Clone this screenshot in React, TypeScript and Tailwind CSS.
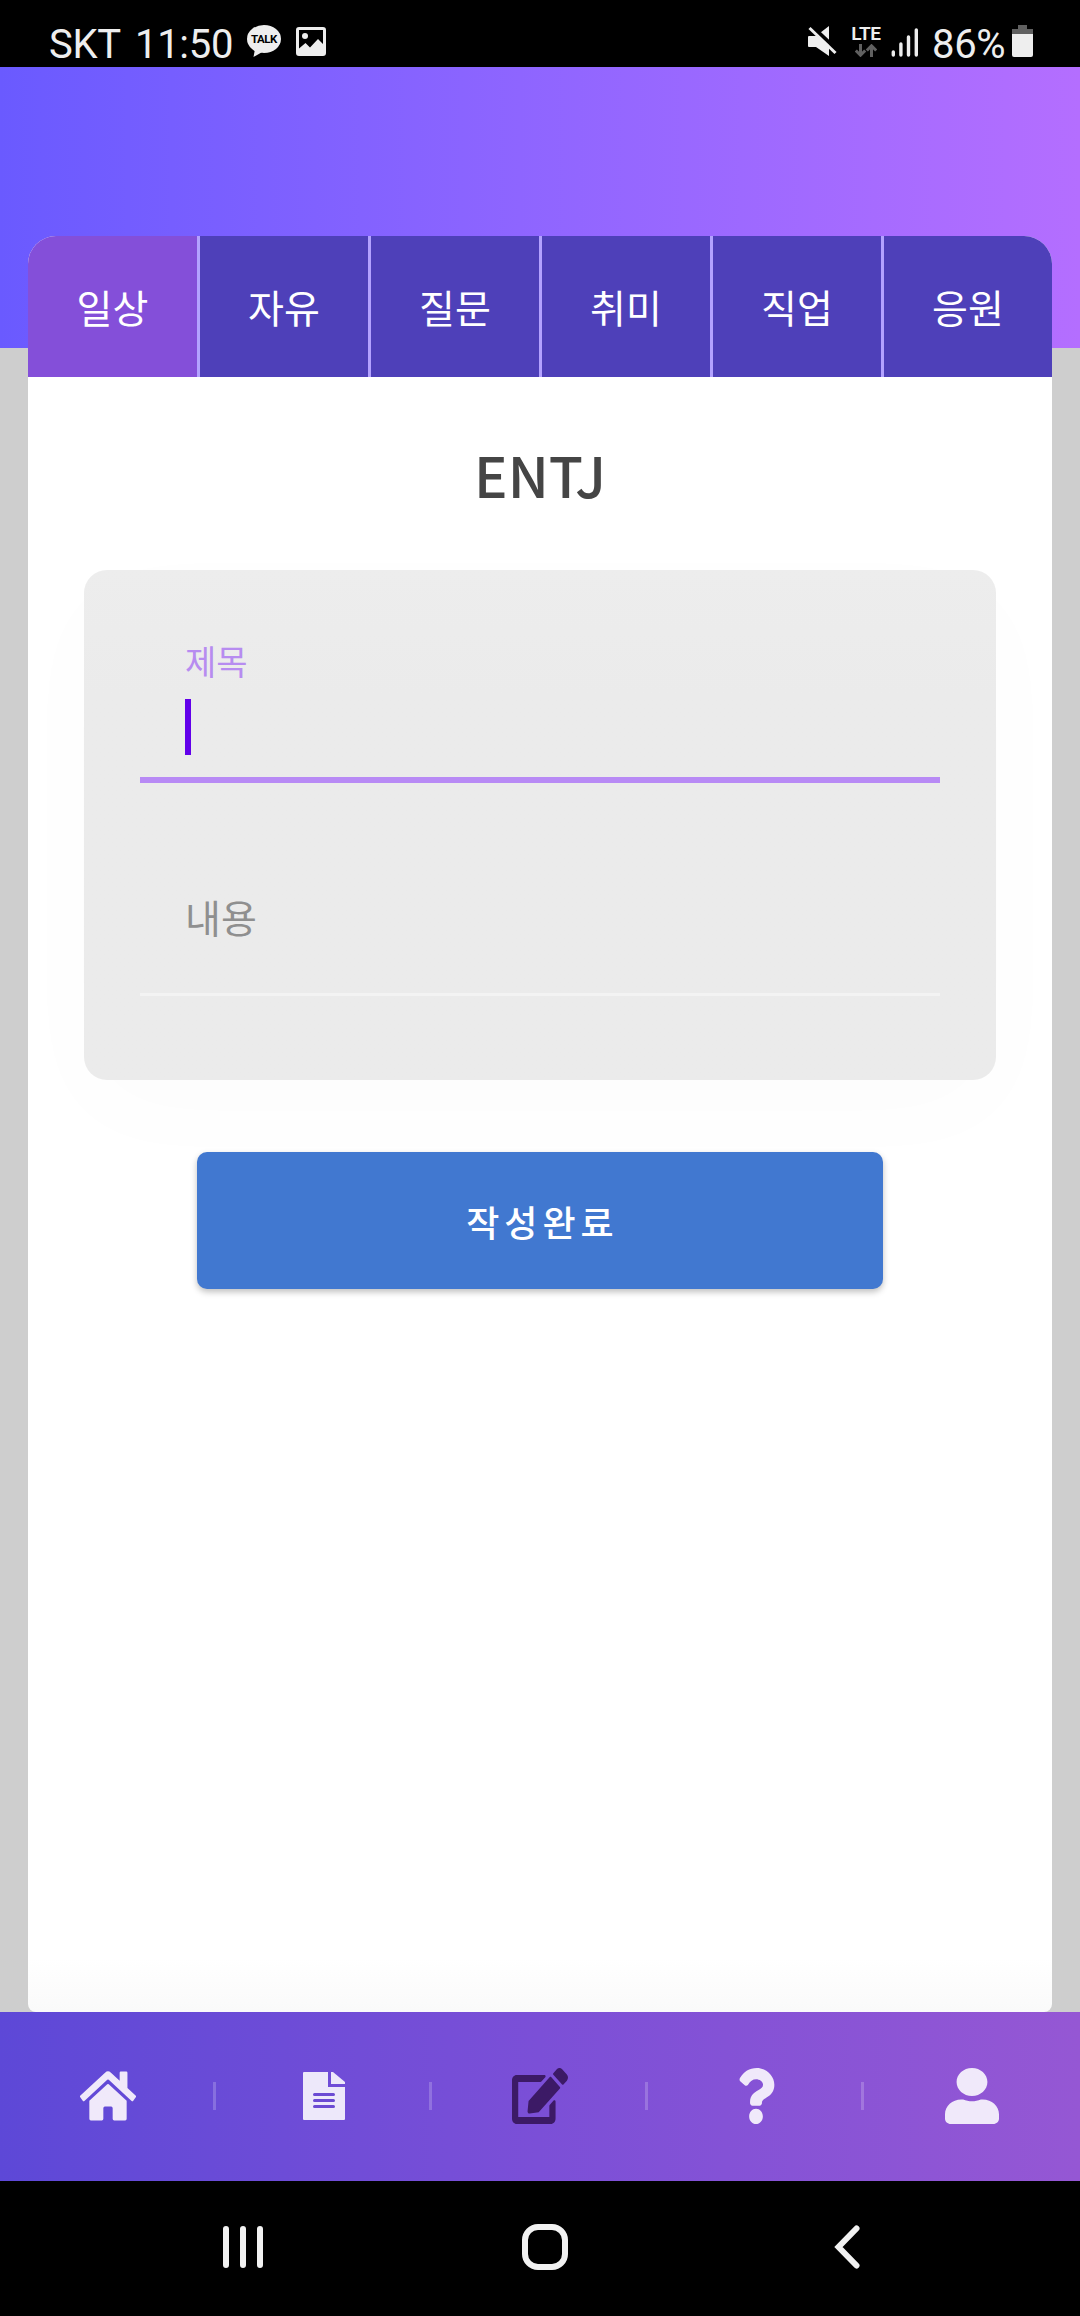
import { useState } from "react";
import { FaEdit, FaHome, FaQuestion, FaUser } from "react-icons/fa";

const TABS = ["일상", "자유", "질문", "취미", "직업", "응원"];

function TalkIcon() {
  return (
    <div className="relative h-8 w-[34px]">
      <svg viewBox="0 0 34 32" className="h-8 w-[34px] fill-[#eeeeee]">
        <ellipse cx="17" cy="14" rx="17" ry="14" />
        <path d="M8 24 6.5 32 17 26Z" />
      </svg>
      <span className="absolute inset-x-0 top-[8px] text-center text-[11.5px] leading-[13px] font-bold tracking-[-0.5px] text-black">
        TALK
      </span>
    </div>
  );
}

function PhotoIcon() {
  return (
    <svg viewBox="0 0 30 29" className="h-[29px] w-[30px]">
      <path
        fill="#eeeeee"
        fillRule="evenodd"
        d="M3 0h24a3 3 0 0 1 3 3v23a3 3 0 0 1-3 3H3a3 3 0 0 1-3-3V3a3 3 0 0 1 3-3ZM3 3v18.500l6.500-5.500 4.500 4.500L22 12l5 5V3Z"
      />
      <circle cx="9" cy="9" r="3" fill="#eeeeee" />
    </svg>
  );
}

function MuteIcon() {
  return (
    <svg viewBox="0 0 29 31" className="h-[31px] w-[29px]">
      <path d="M1 10h7L21 0v30L8 21H1a1 1 0 0 1-1-1v-9a1 1 0 0 1 1-1Z" fill="#eeeeee" />
      <path d="M3.500 0 30 25" stroke="#000" strokeWidth="4" />
      <path d="M1.500 2 27.500 27" stroke="#eeeeee" strokeWidth="3" />
    </svg>
  );
}

function LteIcon() {
  return (
    <div className="flex h-8 w-[30px] flex-col items-center">
      <span className="text-[19px] leading-[17px] font-semibold tracking-[-0.3px]">LTE</span>
      <svg viewBox="0 0 22 13" className="mt-[2px] h-[13px] w-[22px]" fill="none" stroke="#606060" strokeWidth="3">
        <path d="M5.500 0v11M.8 6.500l4.700 4.700 4.700-4.700M16.500 13V2M11.800 6.500l4.700-4.700 4.700 4.700" />
      </svg>
    </div>
  );
}

function SignalIcon() {
  return (
    <svg viewBox="0 0 28 29" className="h-[29px] w-7" stroke="#eeeeee" strokeWidth="3.400" strokeLinecap="round">
      <path d="M2.300 24v3M9.900 16v11M17.500 9v18M25.300 2v25" />
    </svg>
  );
}

function BatteryIcon() {
  return (
    <svg viewBox="0 0 21 32" className="h-8 w-[21px]">
      <path d="M6 0h9v4h6v6H0V4h6Z" fill="#606060" />
      <path d="M0 9h21v21a2 2 0 0 1-2 2H2a2 2 0 0 1-2-2Z" fill="#eeeeee" />
    </svg>
  );
}

function StatusBar() {
  return (
    <div className="flex h-[67px] items-start bg-black pr-[47px] pl-[49px] font-['Roboto'] text-[#eeeeee]">
      <span className="mt-[21px] w-[86px] text-[40px] leading-[48px] tracking-[-0.3px]">SKT</span>
      <span className="mt-[21px] w-[112px] text-[40px] leading-[48px] tracking-[-0.3px]">11:50</span>
      <div className="mt-[25px]">
        <TalkIcon />
      </div>
      <div className="mt-[27px] ml-[15px]">
        <PhotoIcon />
      </div>
      <div className="mt-[26px] ml-auto">
        <MuteIcon />
      </div>
      <div className="mt-[25px] ml-[14px]">
        <LteIcon />
      </div>
      <div className="mt-[28px] ml-[10px]">
        <SignalIcon />
      </div>
      <span className="mt-[21px] ml-[13px] w-[80px] text-[40px] leading-[48px] tracking-[-0.3px]">86%</span>
      <div className="mt-[25px]">
        <BatteryIcon />
      </div>
    </div>
  );
}

function DocIcon() {
  return (
    <svg viewBox="0 0 42 48" className="h-12 w-[42px]">
      <path d="M1 0h24v15h17v32a1 1 0 0 1-1 1H1a1 1 0 0 1-1-1V1a1 1 0 0 1 1-1Z" fill="#ede8fa" />
      <path d="M28 0h2l12 10v2H28Z" fill="#ede8fa" />
      <path d="M11.500 22.500h19M11.500 28.500h19M11.500 34.500h19" stroke="#6b4ad3" strokeWidth="3" strokeLinecap="round" />
    </svg>
  );
}

// the icons are stretched to fill their boxes
const NAV_ITEMS = [
  { id: "home", icon: <FaHome preserveAspectRatio="none" className="h-14 w-14" /> },
  { id: "list", icon: <DocIcon /> },
  { id: "write", icon: <FaEdit preserveAspectRatio="none" className="h-14 w-14 text-[#3c1a66]" /> },
  { id: "help", icon: <FaQuestion preserveAspectRatio="none" className="h-14 w-[38px]" /> },
  { id: "me", icon: <FaUser preserveAspectRatio="none" className="mr-px h-14 w-[54px]" /> },
];

function BottomNav() {
  return (
    <nav className="grid h-[169px] grid-cols-5 bg-linear-to-r from-[#5d48d7] via-[#7b4fd7] to-[#9557d4] text-[#f0e9fa]">
      {NAV_ITEMS.map((item, i) => (
        <button key={item.id} className="relative flex items-center justify-center pb-[2px]">
          {item.icon}
          {i < NAV_ITEMS.length - 1 && (
            <span className="absolute top-[70px] right-0 h-7 w-[3px] bg-white/20" />
          )}
        </button>
      ))}
    </nav>
  );
}

function SystemNav() {
  return (
    <div className="flex h-[135px] items-center bg-black pb-[3px]">
      <svg viewBox="0 0 42 46" className="ml-[222px] h-[46px] w-[42px]" stroke="#f2f2f2" strokeWidth="6" strokeLinecap="round">
        <path d="M4 5v36M21 5v36M38 5v36" />
      </svg>
      <div className="ml-[258px] h-[46px] w-[46px] rounded-[16px] border-[6px] border-[#f2f2f2]" />
      <svg viewBox="0 0 26 46" className="ml-[266px] h-[46px] w-[26px]" fill="none" stroke="#f2f2f2" strokeWidth="6" strokeLinecap="round">
        <path d="M22.500 4.500 4.500 23l18 18.500" />
      </svg>
    </div>
  );
}

export default function App() {
  const [tab, setTab] = useState(0);

  return (
    <div className="flex h-[2316px] w-[1080px] flex-col bg-[#cecece] font-['Noto_Sans_CJK_KR',sans-serif]">
      <StatusBar />
      <div className="h-[281px] shrink-0 bg-linear-to-r from-[#6a5aff] to-[#b46eff]" />

      <main className="z-10 mx-7 -mt-28 flex flex-1 flex-col overflow-hidden rounded-t-[28px] rounded-b-[8px] bg-linear-to-t from-[#fafafa] via-white via-[3%] to-white">
        <div className="grid h-[141px] shrink-0 grid-cols-[172px_repeat(4,171px)_168px]">
          {TABS.map((t, i) => (
            <button
              key={t}
              onClick={() => setTab(i)}
              className={`border-[#b3a2ff] text-[39px] text-white ${i < TABS.length - 1 ? "border-r-[3px]" : ""} ${
                tab === i ? "bg-[#844fd9]" : "bg-[#4e40b9]"
              }`}
            >
              {t}
            </button>
          ))}
        </div>

        <h1 className="mt-[57px] text-center text-[56px] leading-[80px] font-medium text-[#454545]">
          ENTJ
        </h1>

        <form className="mx-14 mt-14 h-[510px] shrink-0 rounded-[23px] bg-linear-to-b from-[#ededed] to-[#ebebeb] to-25% px-14 shadow-[0_30px_110px_rgba(0,0,0,0.015)]">
          <div className="h-[213px] border-b-[6px] border-[#b88af5] pt-[67px] pl-[45px]">
            <label className="block text-[34px] leading-[48px] text-[#b78cf0]">제목</label>
            <div className="mt-[14px] h-14 w-[6px] bg-[#6200ea]" />
          </div>
          <div className="h-[213px] border-b-[3px] border-[#f3f3f3] pt-[105px] pl-[45px]">
            <label className="block text-[39px] leading-[56px] text-[#8f8f8f]">내용</label>
          </div>
        </form>

        <button className="mx-auto mt-[72px] h-[137px] w-[686px] rounded-[10px] bg-[#4178d0] pl-[5px] text-[36px] font-medium tracking-[5px] text-white shadow-[0_3px_6px_rgba(0,0,0,0.25)]">
          작성완료
        </button>
      </main>

      <BottomNav />
      <SystemNav />
    </div>
  );
}
